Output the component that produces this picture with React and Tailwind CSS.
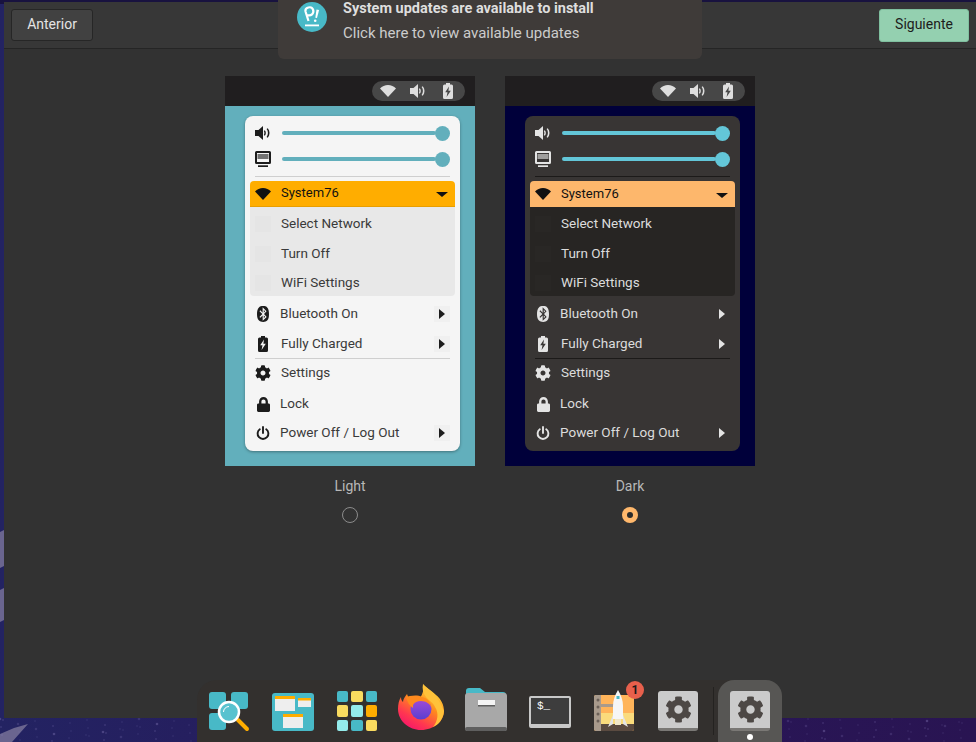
import { FaBluetooth, FaCog, FaLock } from "react-icons/fa";

const themes = {
  light: {
    card: "bg-[#62afbc]",
    menu: "bg-[#f5f5f5] text-[#3a3a3a] shadow-[0_1px_3px_rgba(0,0,0,0.35)]",
    icon: "text-[#1c1c1c]",
    slider: "bg-[#62afbc]",
    sep: "bg-[#cfcfcf]",
    head: "bg-[#ffad00] border-b border-[#e89e00]",
    sub: "bg-[#e8e8e8]",
    ghost: "bg-[#e5e5e5]",
    arrow: "bg-[#f0f0f0] text-[#1c1c1c]",
  },
  dark: {
    card: "bg-[#00003a]",
    menu: "bg-[#383534] text-[#dcdcdc]",
    icon: "text-[#e4e4e4]",
    slider: "bg-[#63c6d8]",
    sep: "bg-[#1c1a19]",
    head: "bg-[#fdb76c]",
    sub: "bg-[#272523]",
    ghost: "bg-[#292725]",
    arrow: "bg-[#383534] text-[#e4e4e4]",
  },
};

function Wifi({ className }) {
  return (
    <svg viewBox="0 0 16 12" className={className} fill="currentColor">
      <path d="M0 3.600C2 1.400 5 0 8 0s6 1.400 8 3.600L8 12z" />
    </svg>
  );
}

function Volume({ className }) {
  return (
    <svg viewBox="0 0 16 14" className={className} fill="currentColor">
      <path d="M0 4h3.500L8 0v14L3.500 10H0z" />
      <path d="M9.800 4.200c1.400 1.600 1.400 4 0 5.600l-1-.9c.8-1.100.8-2.700 0-3.800z" />
      <path d="M12.800 2.200c2.300 2.800 2.300 6.800 0 9.600l-1.200-.9c1.800-2.300 1.800-5.500 0-7.800z" />
    </svg>
  );
}

function Display({ className }) {
  return (
    <svg viewBox="0 0 16 16" className={className} fill="currentColor">
      <path fillRule="evenodd" d="M1.500 0h13A1.500 1.500 0 0 1 16 1.500v10a1.500 1.500 0 0 1-1.500 1.500h-13A1.500 1.500 0 0 1 0 11.500v-10A1.500 1.500 0 0 1 1.500 0zM2 2v9h12V2z" />
      <path d="M2.500 3h11v5h-11z" opacity="0.6" />
      <path d="M3 14.300h10V16H3z" />
    </svg>
  );
}

function Battery({ className }) {
  return (
    <svg viewBox="0 0 10 16" className={className} fill="currentColor">
      <path
        fillRule="evenodd"
        d="M3 0h4v1.500h1.500A1.500 1.500 0 0 1 10 3v11.500A1.500 1.500 0 0 1 8.500 16h-7A1.500 1.500 0 0 1 0 14.500V3a1.500 1.500 0 0 1 1.500-1.500H3zM6 3.500 2.200 9.200h2.300L3.600 14l4.200-6.300H5.400z"
      />
    </svg>
  );
}

function Power({ className }) {
  return (
    <svg viewBox="0 0 14 14" className={className} fill="none" stroke="currentColor" strokeWidth="1.900" strokeLinecap="round">
      <path d="M7 1v6" />
      <path d="M3.800 3.200a5.400 5.400 0 1 0 6.400 0" />
    </svg>
  );
}

function Arrow({ theme }) {
  return (
    <div className={`ml-auto mr-[10px] flex h-[16px] w-[16px] items-center justify-center ${theme.arrow}`}>
      <div className="h-0 w-0 border-y-[5px] border-l-[6px] border-y-transparent border-l-current" />
    </div>
  );
}

function MenuRow({ theme, height, icon, label, arrow, textLeft = "ml-[10px]" }) {
  return (
    <div className={`flex items-center pl-[10px] ${height}`}>
      <div className={`flex h-[16px] w-[16px] shrink-0 items-center justify-center ${theme.icon}`}>{icon}</div>
      <span className={textLeft}>{label}</span>
      {arrow && <Arrow theme={theme} />}
    </div>
  );
}

function SliderRow({ theme, icon }) {
  return (
    <div className="flex h-[26px] items-center pl-[10px] pr-[10px]">
      <div className={`flex h-[16px] w-[16px] shrink-0 items-center justify-center ${theme.icon}`}>{icon}</div>
      <div className={`ml-[11px] h-[4px] flex-1 rounded-full ${theme.slider}`} />
      <div className={`-ml-[1px] h-[15px] w-[15px] rounded-full ${theme.slider}`} />
    </div>
  );
}

function SubRow({ theme, height, label }) {
  return (
    <div className={`flex items-center pl-[5px] ${height}`}>
      <div className={`h-[16px] w-[16px] ${theme.ghost}`} />
      <span className="ml-[10px]">{label}</span>
    </div>
  );
}

function Preview({ theme, label, selected }) {
  return (
    <div className="flex w-[250px] flex-col items-center">
      <div className={`h-[390px] w-full ${theme.card}`}>
        <div className="flex h-[30px] items-start justify-end bg-[#201e1f] pr-[10px] pt-[5px]">
          <div className="flex h-[20px] w-[93px] items-center gap-[14px] rounded-full bg-[#474747] pl-[8px] text-[#dedede]">
            <Wifi className="h-[12px] w-[16px]" />
            <Volume className="h-[14px] w-[16px]" />
            <Battery className="ml-[3px] h-[16px] w-[10px]" />
          </div>
        </div>
        <div className={`ml-[20px] mr-[15px] mt-[10px] h-[335px] rounded-[8px] pt-[4px] text-[13.5px] leading-none ${theme.menu}`}>
          <SliderRow theme={theme} icon={<Volume className="h-[14px] w-[16px]" />} />
          <SliderRow theme={theme} icon={<Display className="h-[16px] w-[16px]" />} />
          <div className={`mx-[10px] mt-[4px] h-px ${theme.sep}`} />
          <div className={`mx-[5px] mt-[4px] flex h-[26px] items-center rounded-t-[4px] pl-[5px] text-[#111111] ${theme.head}`}>
            <Wifi className="h-[12px] w-[16px]" />
            <span className="ml-[10px] -mt-[2px] text-[13px]">System76</span>
            <div className="ml-auto mr-[7px] mt-[2px] h-0 w-0 border-x-[6px] border-t-[5px] border-x-transparent border-t-[#111111]" />
          </div>
          <div className={`mx-[5px] rounded-b-[4px] pt-[2px] ${theme.sub}`}>
            <SubRow theme={theme} height="h-[30px]" label="Select Network" />
            <SubRow theme={theme} height="h-[30px]" label="Turn Off" />
            <SubRow theme={theme} height="h-[27px]" label="WiFi Settings" />
          </div>
          <div className="mt-[3px]">
            <MenuRow theme={theme} height="h-[30px]" icon={<FaBluetooth className="h-[16px] w-[14px]" />} label="Bluetooth On" arrow textLeft="ml-[9px]" />
            <MenuRow theme={theme} height="h-[29px]" icon={<Battery className="h-[16px] w-[10px]" />} label="Fully Charged" arrow />
            <div className={`mx-[10px] h-px ${theme.sep}`} />
            <MenuRow theme={theme} height="h-[28px]" icon={<FaCog className="h-[16px] w-[16px]" />} label="Settings" />
            <MenuRow theme={theme} height="h-[34px]" icon={<FaLock className="h-[15px] w-[13px]" />} label="Lock" textLeft="ml-[9px]" />
            <MenuRow theme={theme} height="h-[24px]" icon={<Power className="h-[14px] w-[14px]" />} label="Power Off / Log Out" arrow textLeft="ml-[9px]" />
          </div>
        </div>
      </div>
      <div className="mt-[12px] text-[14px] leading-[17px] text-[#b8b8b8]">{label}</div>
      <div className="mt-[12px]">
        {selected ? (
          <div className="flex h-[16px] w-[16px] items-center justify-center rounded-full bg-[#ffb86c]">
            <div className="h-[6px] w-[6px] rounded-full bg-[#2b2b2b]" />
          </div>
        ) : (
          <div className="h-[16px] w-[16px] rounded-full border border-[#8c8c8c]" />
        )}
      </div>
    </div>
  );
}

function PopLogo() {
  return (
    <svg viewBox="0 0 30 30" className="h-[30px] w-[30px] shrink-0">
      <circle cx="15" cy="15" r="15" fill="#48b9c7" />
      <path d="M11.500 19 8.500 9.500C7.500 5.500 14.500 3.500 16 7.500s-2 7-6 5.500" fill="none" stroke="#fff" strokeWidth="2.200" />
      <path d="M19.500 7.500l2.600.5-2.100 8-1.700-.3z" fill="#fff" />
      <circle cx="18.200" cy="18.800" r="1.300" fill="#fff" />
      <path d="M8 22.500h14v1.800H8z" fill="#fff" />
    </svg>
  );
}

function SearchIcon() {
  return (
    <svg viewBox="0 0 42 40" className="h-[40px] w-[42px]">
      <rect x="0" y="0" width="17" height="17" rx="3" fill="#48b9c7" />
      <rect x="22" y="0" width="17" height="17" rx="3" fill="#48b9c7" />
      <rect x="0" y="21" width="17" height="17" rx="3" fill="#48b9c7" />
      <path d="M29 28l9 9" stroke="#ffad00" strokeWidth="4" strokeLinecap="round" />
      <circle cx="20" cy="20" r="10" fill="#58c2cf" stroke="#fff" strokeWidth="2.500" />
      <path d="M14.500 20a5.500 5.500 0 0 1 5.500-5.500" fill="none" stroke="#fff" strokeWidth="1" />
    </svg>
  );
}

function WindowsIcon() {
  return (
    <svg viewBox="0 0 42 38" className="h-[38px] w-[42px]">
      <rect x="0" y="0" width="42" height="38" rx="3" fill="#48b9c7" />
      <rect x="3" y="3" width="20" height="15" fill="#eeeeee" />
      <rect x="3" y="3" width="20" height="3" fill="#ffad00" />
      <rect x="26" y="5" width="13" height="9" fill="#eeeeee" />
      <rect x="26" y="5" width="13" height="2.500" fill="#ffad00" />
      <rect x="11" y="21" width="20" height="14" fill="#eeeeee" />
      <rect x="11" y="21" width="20" height="3" fill="#ffad00" />
    </svg>
  );
}

function GridIcon() {
  const colors = ["#48b9c7", "#fadb5f", "#48b9c7", "#fadb5f", "#94ebeb", "#ffad00", "#94ebeb", "#48b9c7", "#fadb5f"];
  return (
    <div className="grid h-[40px] w-[40px] grid-cols-3 gap-[3px]">
      {colors.map((c, i) => (
        <div key={i} className="rounded-[2px]" style={{ backgroundColor: c }} />
      ))}
    </div>
  );
}

function FirefoxIcon() {
  return (
    <svg viewBox="0 0 46 46" className="h-[46px] w-[46px]">
      <defs>
        <linearGradient id="ffa" x1="0.8" y1="0.1" x2="0.25" y2="1">
          <stop offset="0" stopColor="#ffd93b" />
          <stop offset="0.4" stopColor="#ff8a1e" />
          <stop offset="0.75" stopColor="#ff3750" />
          <stop offset="1" stopColor="#f5156c" />
        </linearGradient>
        <linearGradient id="ffb" x1="0.5" y1="0" x2="0.5" y2="1">
          <stop offset="0" stopColor="#a34bd8" />
          <stop offset="1" stopColor="#5a3fd0" />
        </linearGradient>
      </defs>
      <path d="M25 0c1 3 8 6 13 11 5 4 8 10 8 16 0 10-10 19-23 19C11 46 0 37 0 25c0-5 1-9 3-12 0 3 1 4 2 5 0-3 2-5 4-8l2 5c3-2 8-3 11-1 3-4 4-9 3-14z" fill="url(#ffa)" />
      <path d="M25 0c5 5 15 11 21 27-1 9-6 14-11 16 5-6 6-14 2-20-2-5-6-6-9-10-3-4-4-8-3-13z" fill="#ffc23a" />
      <circle cx="23" cy="25" r="10.500" fill="url(#ffb)" />
      <path d="M8 13c3-1 11-3 16 0 5 1 9 5 9 10-1-3-5-6-10-6-4 0-6 1-8 4 0 2 0 3 0 3-3-2-6-6-7-11z" fill="#ff8a1e" />
    </svg>
  );
}

function FolderIcon() {
  return (
    <svg viewBox="0 0 42 44" className="h-[44px] w-[42px]">
      <path d="M1 4a3 3 0 0 1 3-3h11l5 4h18a3 3 0 0 1 3 3v6H1z" fill="#48b9c7" />
      <rect x="0" y="6" width="42" height="38" rx="3" fill="#a8a8a8" />
      <rect x="0" y="40" width="42" height="4" rx="2" fill="#5f5f5f" />
      <rect x="13" y="13" width="17" height="5" fill="#f4f4f4" />
      <rect x="13" y="18" width="17" height="1.500" fill="#5f5f5f" />
    </svg>
  );
}

function TerminalIcon() {
  return (
    <div className="flex h-[32px] w-[42px] rounded-[2px] border-[2px] border-b-[4px] border-[#c8c8c8] bg-[#3d3d3d] pl-[6px] font-['Liberation_Mono',monospace] text-[11px] leading-[17px] text-white">
      $_
    </div>
  );
}

function ShopIcon() {
  return (
    <svg viewBox="0 0 40 41" className="h-[41px] w-[40px]">
      <path d="M0 7a2 2 0 0 1 2-2h38v34a2 2 0 0 1-2 2H2a2 2 0 0 1-2-2z" fill="#ffb45a" />
      <rect x="7" y="23" width="33" height="11" fill="#fadb7c" />
      <path d="M7 34h33v5a2 2 0 0 1-2 2H7z" fill="#5a4a40" />
      <path d="M0 7a2 2 0 0 1 2-2h5v36H2a2 2 0 0 1-2-2z" fill="#a89a8c" />
      <circle cx="4" cy="10" r="1.500" fill="#6b6058" />
      <circle cx="4" cy="17" r="1.500" fill="#6b6058" />
      <circle cx="4" cy="24" r="1.500" fill="#6b6058" />
      <circle cx="4" cy="31" r="1.500" fill="#6b6058" />
      <rect x="7" y="14" width="14" height="3" fill="#a89a8c" />
      <path d="M24 0c3 5 5 10 5 16v13H19V16c0-6 2-11 5-16z" fill="#f6f6f6" />
      <path d="M19 25l-5 12 5-3zM29 25l5 12-5-3z" fill="#e4e4e4" />
      <rect x="22.500" y="6" width="3" height="3" fill="#48b9c7" />
      <rect x="21" y="29" width="6" height="6" fill="#f0e6c8" />
    </svg>
  );
}

function SettingsIcon() {
  return (
    <div className="flex h-[40px] w-[40px] items-center justify-center rounded-[3px] border-b-[3px] border-[#7a7875] bg-[#cbcbcb]">
      <FaCog className="h-[27px] w-[27px] text-[#4d4845]" />
    </div>
  );
}

// starry wallpaper behind the window, only the edges show
function Wallpaper() {
  const stars = [];
  for (let i = 0; i < 200; i++) {
    const x = (i * 137) % 976;
    const y = 719 + ((i * 53) % 23);
    stars.push(<circle key={i} cx={x} cy={y} r={i % 5 === 0 ? 1.300 : 0.800} fill="#8f84c4" opacity={i % 3 === 0 ? 0.35 : 0.2} />);
  }
  return (
    <svg className="absolute inset-0 h-full w-full" viewBox="0 0 976 742">
      <defs>
        <linearGradient id="wall" x1="0" y1="0" x2="1" y2="0">
          <stop offset="0" stopColor="#232362" />
          <stop offset="0.5" stopColor="#28185a" />
          <stop offset="1" stopColor="#291452" />
        </linearGradient>
      </defs>
      <rect width="976" height="742" fill="url(#wall)" />
      <rect x="0" y="0" width="976" height="4" fill="#18123f" />
      <path d="M0 532 4 530V566L0 568zM0 590l4-2v32l-4 2zM0 742V734L14 728 28 724 12 742z" fill="#6a658f" />
      {stars}
    </svg>
  );
}

export default function App() {
  return (
    <div className="relative h-[742px] w-[976px] overflow-hidden font-['Roboto',sans-serif]">
      <Wallpaper />

      {/* window */}
      <div className="relative ml-[4px] mt-[2px] h-[716px] bg-[#323232]">
        <div className="flex h-[47px] items-center justify-between border-b border-[#252525] bg-[#373737] pl-[7px] pr-[7px]">
          <button className="h-[32px] w-[82px] rounded-[3px] border border-[#262626] bg-[#414141] pb-[2px] text-[14px] text-[#e4e4e4]">Anterior</button>
          <button className="h-[33px] w-[90px] rounded-[3px] border border-[#7fbf9f] bg-[#94d0b0] pb-[1px] text-[14px] text-[#1c1c1c]">Siguiente</button>
        </div>
        <div className="flex justify-center gap-[30px] pt-[27px]">
          <Preview theme={themes.light} label="Light" />
          <Preview theme={themes.dark} label="Dark" selected />
        </div>
      </div>

      {/* notification */}
      <div className="absolute left-[278px] top-0 flex h-[59px] w-[424px] gap-[16px] rounded-b-[6px] bg-[#3f3b39] pl-[19px]">
        <div className="pt-[2px]">
          <PopLogo />
        </div>
        <div className="leading-[24px]">
          <div className="-mt-[3px] text-[14.5px] font-bold text-[#dedede]">System updates are available to install</div>
          <div className="text-[15px] text-[#cccccc]">Click here to view available updates</div>
        </div>
      </div>

      {/* dock */}
      <div className="absolute bottom-0 left-[197px] flex h-[62px] w-[585px] items-center rounded-t-[20px] bg-[#33302e] pl-[12px]">
        <div className="flex w-[504px] items-center">
          <div className="mt-[1px]"><SearchIcon /></div>
          <div className="ml-[21px] mt-[1px]"><WindowsIcon /></div>
          <div className="ml-[23px]"><GridIcon /></div>
          <div className="ml-[21px] -mt-[8px]"><FirefoxIcon /></div>
          <div className="ml-[21px] -mt-[5px]"><FolderIcon /></div>
          <div className="ml-[22px] mt-[2px]"><TerminalIcon /></div>
          <div className="relative ml-[23px] -mt-[1px]">
            <ShopIcon />
            <div className="absolute -right-[10px] -top-[9px] flex h-[18px] w-[18px] items-center justify-center rounded-full bg-[#e8604c] text-[12px] font-bold leading-none text-[#1a1a1a]">1</div>
          </div>
          <div className="ml-[24px]"><SettingsIcon /></div>
        </div>
        <div className="h-[48px] w-px bg-[#242220]" />
        <div className="ml-[4px] flex h-[63px] w-[64px] flex-col items-center rounded-[16px] rounded-b-none bg-[#575654] pt-[11px]">
          <SettingsIcon />
          <div className="mt-[3px] h-[6px] w-[6px] rounded-full bg-white" />
        </div>
      </div>
    </div>
  );
}
